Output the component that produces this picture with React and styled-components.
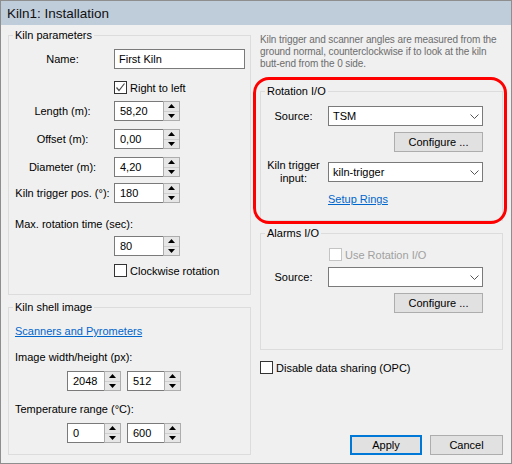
import React from "react";
import styled, { createGlobalStyle } from "styled-components";

const GlobalStyle = createGlobalStyle`
  html, body {
    margin: 0;
    padding: 0;
    background: #f0f0f0;
  }
  body {
    font-family: "Liberation Sans", Arial, sans-serif;
    font-size: 11px;
    color: #000;
  }
  * {
    box-sizing: border-box;
  }
`;

const Window = styled.div`
  position: relative;
  width: 512px;
  height: 464px;
  border: 1px solid #8e8e8e;
  background: #f0f0f0;
  display: flex;
  flex-direction: column;
`;

const TitleBar = styled.div`
  height: 24px;
  flex: none;
  display: flex;
  align-items: center;
  padding-left: 6px;
  background: #bfcddb;
  color: #111;
  font-size: 13.5px;
`;

const Body = styled.div`
  flex: 1;
  display: grid;
  grid-template-columns: 243px 243px;
  column-gap: 9px;
  padding: 2px 8px 8px 7px;
`;

const Column = styled.div`
  display: flex;
  flex-direction: column;
`;

const Group = styled.fieldset`
  margin: ${(p) => p.$mt || 0}px 0 0;
  padding: 0 0 0 6px;
  min-width: 0;
  height: ${(p) => p.$h}px;
  border: 1px solid #dcdcdc;
  display: flex;
  flex-direction: column;
`;

const Legend = styled.legend`
  margin-left: -2px;
  padding: 0 2px;
  line-height: 16px;
  font-size: 11px;
`;

const Row = styled.div`
  display: flex;
  align-items: center;
  flex: none;
  margin-top: ${(p) => p.$mt || 0}px;
  height: ${(p) => p.$h || 20}px;
  padding-left: ${(p) => p.$indent || 0}px;
  gap: ${(p) => p.$gap || 0}px;
  white-space: nowrap;
`;

const Label = styled.div`
  flex: none;
  width: ${(p) => p.$w}px;
  margin-right: ${(p) => p.$gap}px;
  text-align: center;
  line-height: 13px;
`;

const TextBox = styled.div`
  width: ${(p) => p.$w}px;
  height: 20px;
  display: flex;
  align-items: center;
  padding-left: 4px;
  background: #fff;
  border: 1px solid #7a7a7a;
`;

const SpinWrap = styled.div`
  width: ${(p) => p.$w}px;
  height: 20px;
  display: flex;
`;

const SpinField = styled.div`
  flex: 1;
  display: flex;
  align-items: center;
  padding-left: 5px;
  background: #fff;
  border: 1px solid #7a7a7a;
  border-right: none;
`;

const Spinner = styled.div`
  width: 17px;
  display: flex;
  flex-direction: column;
  background: #e6e6e6;
  border: 1px solid #adadad;
`;

const SpinHalf = styled.div`
  flex: 1;
  display: flex;
  align-items: center;
  justify-content: center;

  & + & {
    border-top: 1px solid #cfcfcf;
  }
`;

const Combo = styled.div`
  width: 155px;
  height: 20px;
  display: flex;
  align-items: center;
  justify-content: space-between;
  padding: 0 3px 0 4px;
  background: #fff;
  border: 1px solid #7a7a7a;
`;

const Box = styled.span`
  width: 13px;
  height: 13px;
  flex: none;
  display: flex;
  align-items: center;
  justify-content: center;
  background: #fff;
  border: 1px solid ${(p) => (p.$disabled ? "#c4c4c4" : "#333")};
`;

const CheckText = styled.span`
  margin-left: 3px;
  color: ${(p) => (p.$disabled ? "#a0a0a0" : "#000")};
`;

const Link = styled.span`
  color: #0066cc;
  text-decoration: underline;
`;

const Button = styled.div`
  width: ${(p) => p.$w}px;
  height: 20px;
  display: flex;
  align-items: center;
  justify-content: center;
  background: #e1e1e1;
  border: ${(p) => (p.$default ? "2px solid #0078d7" : "1px solid #adadad")};
`;

const Info = styled.div`
  margin-top: 7px;
  color: #6d6d6d;
  font-size: 10px;
  line-height: 12px;
  letter-spacing: -0.1px;
  white-space: nowrap;
`;

const ButtonBar = styled.div`
  margin-top: auto;
  display: flex;
  justify-content: flex-end;
  gap: 8px;
`;

const Highlight = styled.div`
  position: absolute;
  left: 252px;
  top: 76px;
  width: 254px;
  height: 147px;
  border: 3px solid #ff0000;
  border-radius: 16px;
  pointer-events: none;
`;

const Arrow = ({ up }) => (
  <svg width="7" height="4" viewBox="0 0 7 4">
    <path d={up ? "M0 4 L3.5 0 L7 4 Z" : "M0 0 L3.5 4 L7 0 Z"} fill="#000" />
  </svg>
);

const Chevron = () => (
  <svg width="9" height="5" viewBox="0 0 9 5">
    <path d="M0.5 0.5 L4.5 4.5 L8.5 0.5" fill="none" stroke="#555" strokeWidth="1" />
  </svg>
);

const SpinBox = ({ w = 66, value }) => (
  <SpinWrap $w={w}>
    <SpinField>{value}</SpinField>
    <Spinner>
      <SpinHalf>
        <Arrow up />
      </SpinHalf>
      <SpinHalf>
        <Arrow />
      </SpinHalf>
    </Spinner>
  </SpinWrap>
);

const Check = ({ checked, disabled, children, ...rest }) => (
  <Row $h={15} {...rest}>
    <Box $disabled={disabled}>
      {checked && (
        <svg width="11" height="11" viewBox="0 0 11 11">
          <polyline points="1.5,5.5 4,8.5 9.5,1.5" fill="none" stroke="#4a4a4a" strokeWidth="1.2" />
        </svg>
      )}
    </Box>
    <CheckText $disabled={disabled}>{children}</CheckText>
  </Row>
);

const LeftField = ({ label, mt, children }) => (
  <Row $mt={mt}>
    <Label $w={95} $gap={4}>
      {label}
    </Label>
    {children}
  </Row>
);

const RightField = ({ label, mt, children }) => (
  <Row $mt={mt}>
    <Label $w={53} $gap={8}>
      {label}
    </Label>
    {children}
  </Row>
);

const App = () => {
  return (
    <>
      <GlobalStyle />
      <Window>
        <TitleBar>Kiln1: Installation</TitleBar>
        <Body>
          <Column>
            <Group $h={268}>
              <Legend>Kiln parameters</Legend>
              <LeftField label="Name:" mt={6}>
                <TextBox $w={131}>First Kiln</TextBox>
              </LeftField>
              <Check checked $mt={11} $indent={99}>
                Right to left
              </Check>
              <LeftField label="Length (m):" mt={6}>
                <SpinBox value="58,20" />
              </LeftField>
              <LeftField label="Offset (m):" mt={8}>
                <SpinBox value="0,00" />
              </LeftField>
              <LeftField label="Diameter (m):" mt={8}>
                <SpinBox value="4,20" />
              </LeftField>
              <LeftField label="Kiln trigger pos. (°):" mt={6}>
                <SpinBox value="180" />
              </LeftField>
              <Row $mt={13} $h={16}>
                Max. rotation time (sec):
              </Row>
              <Row $mt={4} $indent={99}>
                <SpinBox value="80" />
              </Row>
              <Check $mt={7} $indent={99}>
                Clockwise rotation
              </Check>
            </Group>

            <Group $mt={4} $h={156}>
              <Legend>Kiln shell image</Legend>
              <Row $mt={8} $h={16}>
                <Link>Scanners and Pyrometers</Link>
              </Row>
              <Row $mt={10} $h={16}>
                Image width/height (px):
              </Row>
              <Row $mt={6} $indent={52} $gap={6}>
                <SpinBox w={54} value="2048" />
                <SpinBox w={54} value="512" />
              </Row>
              <Row $mt={10} $h={16}>
                Temperature range (°C):
              </Row>
              <Row $mt={6} $indent={52} $gap={6}>
                <SpinBox w={54} value="0" />
                <SpinBox w={54} value="600" />
              </Row>
            </Group>
          </Column>

          <Column>
            <Info>
              Kiln trigger and scanner angles are measured from the
              <br />
              ground normal, counterclockwise if to look at the kiln
              <br />
              butt-end from the 0 side.
            </Info>

            <Group $mt={13} $h={138}>
              <Legend>Rotation I/O</Legend>
              <RightField label="Source:" mt={7}>
                <Combo>
                  TSM
                  <Chevron />
                </Combo>
              </RightField>
              <Row $mt={6} $indent={127}>
                <Button $w={89}>Configure ...</Button>
              </Row>
              <RightField
                label={
                  <>
                    Kiln trigger
                    <br />
                    input:
                  </>
                }
                mt={10}
              >
                <Combo>
                  kiln-trigger
                  <Chevron />
                </Combo>
              </RightField>
              <Row $mt={9} $h={16} $indent={61}>
                <Link>Setup Rings</Link>
              </Row>
            </Group>

            <Group $mt={4} $h={125}>
              <Legend>Alarms I/O</Legend>
              <Check disabled $mt={6} $indent={62}>
                Use Rotation I/O
              </Check>
              <RightField label="Source:" mt={5}>
                <Combo>
                  <span />
                  <Chevron />
                </Combo>
              </RightField>
              <Row $mt={6} $indent={127}>
                <Button $w={89}>Configure ...</Button>
              </Row>
            </Group>

            <Check $mt={10}>Disable data sharing (OPC)</Check>

            <ButtonBar>
              <Button $w={72} $default>
                Apply
              </Button>
              <Button $w={73}>Cancel</Button>
            </ButtonBar>
          </Column>
        </Body>
        <Highlight />
      </Window>
    </>
  );
};

export default App;
